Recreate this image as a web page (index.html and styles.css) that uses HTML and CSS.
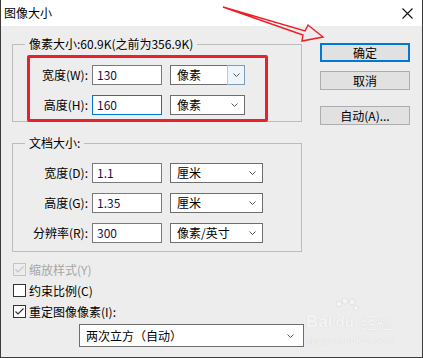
FILE: index.html
```html
<!DOCTYPE html>
<html lang="zh-CN">
<head>
<meta charset="utf-8">
<title>图像大小</title>
<link rel="stylesheet" href="styles.css">
</head>
<body>
<div class="window">
  <div class="titlebar">
    <span class="title">图像大小</span>
    <svg class="close" width="11" height="11" viewBox="0 0 11 11"><path d="M0.5 0.5 L10.5 10.5 M10.5 0.5 L0.5 10.5" stroke="#111" stroke-width="1.1" fill="none"/></svg>
  </div>
  <div class="body">
    <div class="left">
      <fieldset class="group g1">
        <legend>像素大小:60.9K(之前为356.9K)</legend>
        <div class="row">
          <label class="lbl">宽度(W):</label>
          <div class="input">130</div>
          <div class="select hover"><span class="val">像素</span><span class="arrow"><svg width="7" height="4" viewBox="0 0 7 4"><polyline points="0.5,0.5 3.5,3.5 6.5,0.5" fill="none" stroke="#555" stroke-width="1"/></svg></span></div>
        </div>
        <div class="row">
          <label class="lbl">高度(H):</label>
          <div class="input focus">160</div>
          <div class="select"><span class="val">像素</span><span class="arrow"><svg width="7" height="4" viewBox="0 0 7 4"><polyline points="0.5,0.5 3.5,3.5 6.5,0.5" fill="none" stroke="#555" stroke-width="1"/></svg></span></div>
        </div>
      </fieldset>
      <fieldset class="group g2">
        <legend>文档大小:</legend>
        <div class="row">
          <label class="lbl">宽度(D):</label>
          <div class="input">1.1</div>
          <div class="select"><span class="val">厘米</span><span class="arrow"><svg width="7" height="4" viewBox="0 0 7 4"><polyline points="0.5,0.5 3.5,3.5 6.5,0.5" fill="none" stroke="#555" stroke-width="1"/></svg></span></div>
        </div>
        <div class="row">
          <label class="lbl">高度(G):</label>
          <div class="input">1.35</div>
          <div class="select"><span class="val">厘米</span><span class="arrow"><svg width="7" height="4" viewBox="0 0 7 4"><polyline points="0.5,0.5 3.5,3.5 6.5,0.5" fill="none" stroke="#555" stroke-width="1"/></svg></span></div>
        </div>
        <div class="row">
          <label class="lbl">分辨率(R):</label>
          <div class="input">300</div>
          <div class="select"><span class="val">像素/英寸</span><span class="arrow"><svg width="7" height="4" viewBox="0 0 7 4"><polyline points="0.5,0.5 3.5,3.5 6.5,0.5" fill="none" stroke="#555" stroke-width="1"/></svg></span></div>
        </div>
      </fieldset>
      <div class="checks">
        <div class="check disabled"><span class="box"><svg width="11" height="11" viewBox="0 0 11 11"><polyline points="1.5,5.5 4,8 9.5,2.5" fill="none" stroke="#c4c4c4" stroke-width="1.2"/></svg></span><span>缩放样式(Y)</span></div>
        <div class="check"><span class="box"></span><span>约束比例(C)</span></div>
        <div class="check"><span class="box"><svg width="11" height="11" viewBox="0 0 11 11"><polyline points="1.5,5.5 4,8 9.5,2.5" fill="none" stroke="#333" stroke-width="1.2"/></svg></span><span>重定图像像素(I):</span></div>
      </div>
      <div class="select resample"><span class="val">两次立方（自动）</span><span class="arrow"><svg width="7" height="4" viewBox="0 0 7 4"><polyline points="0.5,0.5 3.5,3.5 6.5,0.5" fill="none" stroke="#555" stroke-width="1"/></svg></span></div>
    </div>
    <div class="right">
      <button class="btn default">确定</button>
      <button class="btn">取消</button>
      <button class="btn auto">自动(A)...</button>
    </div>
  </div>
  <div class="redbox"></div>
  <svg class="arrow-anno" width="423" height="60" viewBox="0 0 423 60">
    <polygon points="223,7 305,31 308,25 323,37 302,41 303,35" fill="none" stroke="#ee1c25" stroke-width="1.4" stroke-linejoin="miter"/>
  </svg>
  <div class="watermark">
    <div class="wm-top"><span class="wm-bai">Bai</span><span class="wm-paw"><svg width="26" height="24" viewBox="0 0 26 24"><circle cx="6" cy="6" r="3" /><circle cx="12" cy="3" r="3"/><circle cx="19" cy="4" r="3"/><circle cx="23" cy="10" r="2.6"/></svg><span class="wm-du">du</span></span><span class="wm-cn">经验</span></div>
    <div class="wm-url">jingyan.baidu.com</div>
  </div>
</div>
</body>
</html>
```

FILE: styles.css
```css
* { box-sizing: border-box; }
html, body { margin: 0; padding: 0; }
body {
  font-family: "Noto Sans CJK SC", "Liberation Sans", sans-serif;
  font-size: 12px;
  color: #000;
  background: #ededed;
}
.window {
  position: relative;
  width: 423px;
  height: 358px;
  background: #ededed;
  border-left: 1px solid #3c3c3c;
  border-right: 1px solid #3c3c3c;
  border-bottom: 1px solid #3c3c3c;
  overflow: hidden;
}
.titlebar {
  height: 26px;
  background: #fff;
  display: flex;
  align-items: center;
  justify-content: space-between;
  padding: 0 9px 1px 3px;
}
.title { font-size: 12px; line-height: 16px; }
.close { display: block; margin-top: 1px; }

.body {
  display: flex;
  padding: 10px 0 0 11px;
}
.left { width: 291px; display: flex; flex-direction: column; }
.right {
  width: 90px;
  margin-left: 17px;
  margin-top: 7px;
  display: flex;
  flex-direction: column;
}

.group {
  width: 290px;
  margin: 0;
  border: 1px solid #bcbcbc;
  padding: 0 0 6px 0;
  display: flex;
  flex-direction: column;
  gap: 10px;
  min-width: 0;
}
.group legend {
  margin-left: 12px;
  padding: 0 4px;
  line-height: 16px;
  height: 16px;
}
.g1 { padding-top: 13px; }
.g2 { margin-top: 13px; padding-top: 12px; padding-bottom: 8px; }

.row {
  display: grid;
  grid-template-columns: 75px 74px 83px;
  align-items: center;
  height: 20px;
}
.g2 .row { grid-template-columns: 75px 74px 101px; }
.lbl {
  text-align: right;
  line-height: 20px;
}
.input {
  margin-left: 4px;
  width: 70px;
  height: 20px;
  border: 1px solid #7a7a7a;
  background: #fff;
  line-height: 18px;
  padding-left: 4px;
  color: #1a1040;
}
.input.focus { border-color: #0078d7; }
.row .select { margin-left: 8px; }
.select {
  height: 20px;
  border: 1px solid #6e6e6e;
  background: #fff;
  display: flex;
  align-items: stretch;
}
.select .val {
  flex: 1;
  padding-left: 6px;
  line-height: 18px;
  white-space: nowrap;
}
.select .arrow {
  width: 17px;
  display: flex;
  align-items: center;
  justify-content: center;
  padding-right: 2px;
}
.select.hover .arrow {
  background: #eef5fb;
  border-left: 1px solid #b2cbe2;
  margin: -1px -1px -1px 0;
  border-top: 1px solid #7f9db9;
  border-right: 1px solid #7f9db9;
  border-bottom: 1px solid #7f9db9;
  padding-right: 0;
  width: 18px;
}
.checks {
  margin-top: 7px;
  display: flex;
  flex-direction: column;
}
.check {
  height: 21px;
  display: flex;
  align-items: center;
  gap: 3px;
  padding-left: 1px;
}
.check .box {
  width: 13px;
  height: 13px;
  border: 1px solid #333;
  background: #fff;
  display: flex;
  align-items: center;
  justify-content: center;
}
.check.disabled { color: #a6a6a6; }
.check.disabled .box { border-color: #c4c4c4; background: #ededed; }
.resample {
  margin-top: 2px;
  margin-left: 67px;
  width: 225px;
  height: 23px;
}
.resample .val { line-height: 21px; }
.resample .arrow { padding-right: 6px; width: 20px; }

.btn {
  font: inherit;
  font-size: 12px;
  height: 19px;
  width: 90px;
  padding: 0;
  background: #e1e1e1;
  border: 1px solid #adadad;
  color: #000;
  line-height: 16px;
}
.btn.default { border: 2px solid #0078d7; }
.btn + .btn { margin-top: 9px; }
.btn.auto { margin-top: 16px; }

.redbox {
  position: absolute;
  left: 26px;
  top: 55px;
  width: 241px;
  height: 67px;
  border: 3px solid #e8222b;
  border-radius: 2px;
}
.arrow-anno {
  position: absolute;
  left: -1px;
  top: 0;
}
.watermark {
  position: absolute;
  left: 305px;
  top: 298px;
  color: #f4f4f4;
  text-shadow: 0 0 1px #d0d0d0;
  font-family: "Liberation Sans", sans-serif;
}
.wm-top { display: flex; align-items: flex-end; height: 34px; }
.wm-bai { font-size: 17px; font-weight: bold; line-height: 20px; }
.wm-paw { position: relative; display: inline-block; width: 28px; height: 34px; }
.wm-paw svg { position: absolute; left: 1px; top: 0; fill: #f4f4f4; stroke: #d6d6d6; stroke-width: 0.6; }
.wm-du { position: absolute; left: 3px; bottom: 0; font-size: 15px; font-weight: bold; line-height: 20px; }
.wm-cn { font-family: "Noto Sans CJK SC", sans-serif; font-size: 16px; line-height: 20px; }
.wm-url { font-size: 11px; line-height: 14px; margin-top: 1px; }
```
